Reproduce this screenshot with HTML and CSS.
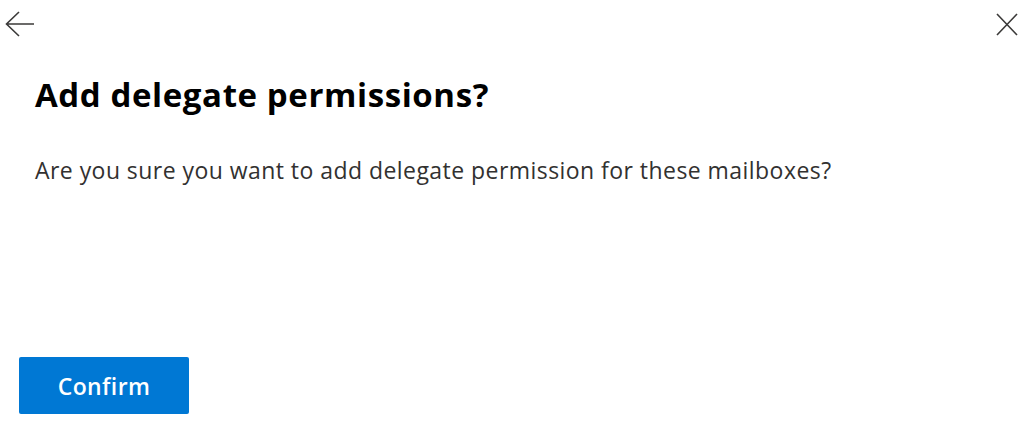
FILE: index.html
```html
<!DOCTYPE html>
<html lang="en">
<head>
<meta charset="utf-8">
<title>Add delegate permissions?</title>
<link rel="stylesheet" href="styles.css">
</head>
<body>
<div class="page">
  <header class="topbar">
    <button class="icon-btn back" aria-label="Back">
      <svg width="29" height="26" viewBox="0 0 29 26"><path d="M14 1 L1.5 13 L14 25 M1.5 13 H29" fill="none" stroke="#3b3a39" stroke-width="1.6"/></svg>
    </button>
    <button class="icon-btn close" aria-label="Close">
      <svg width="22" height="23" viewBox="0 0 22 23"><path d="M1 1 L21 22 M21 1 L1 22" fill="none" stroke="#3b3a39" stroke-width="1.6"/></svg>
    </button>
  </header>
  <h1 class="title">Add delegate permissions?</h1>
  <p class="message">Are you sure you want to add delegate permission for these mailboxes?</p>
  <div class="actions">
    <button class="primary">Confirm</button>
  </div>
</div>
</body>
</html>
```
FILE: styles.css
```css
html, body {
  margin: 0;
  padding: 0;
  background: #ffffff;
}
body {
  font-family: "Open Sans", "Noto Sans", sans-serif;
  color: #323130;
}
.page {
  height: 423px;
  display: flex;
  flex-direction: column;
  box-sizing: border-box;
  padding-bottom: 9px;
}
.topbar {
  height: 48px;
  display: flex;
  align-items: center;
  justify-content: space-between;
  padding: 0 6px 0 5px;
}
.icon-btn {
  border: 0;
  background: none;
  padding: 0;
  display: flex;
  cursor: pointer;
}
.title {
  margin: 27px 0 0 35px;
  font-size: 33px;
  line-height: 40px;
  font-weight: 700;
  color: #000000;
  letter-spacing: 0.6px;
}
.message {
  margin: 40px 0 0 35px;
  font-size: 23px;
  line-height: 30px;
  color: #323130;
  letter-spacing: 0.45px;
}
.actions {
  margin-top: auto;
  padding-left: 19px;
}
.primary {
  width: 170px;
  height: 57px;
  border: 0;
  border-radius: 2px;
  background: #0078d4;
  color: #ffffff;
  font-family: "Open Sans", "Noto Sans", sans-serif;
  font-size: 23px;
  font-weight: 600;
  letter-spacing: 0.4px;
  cursor: pointer;
}
```
